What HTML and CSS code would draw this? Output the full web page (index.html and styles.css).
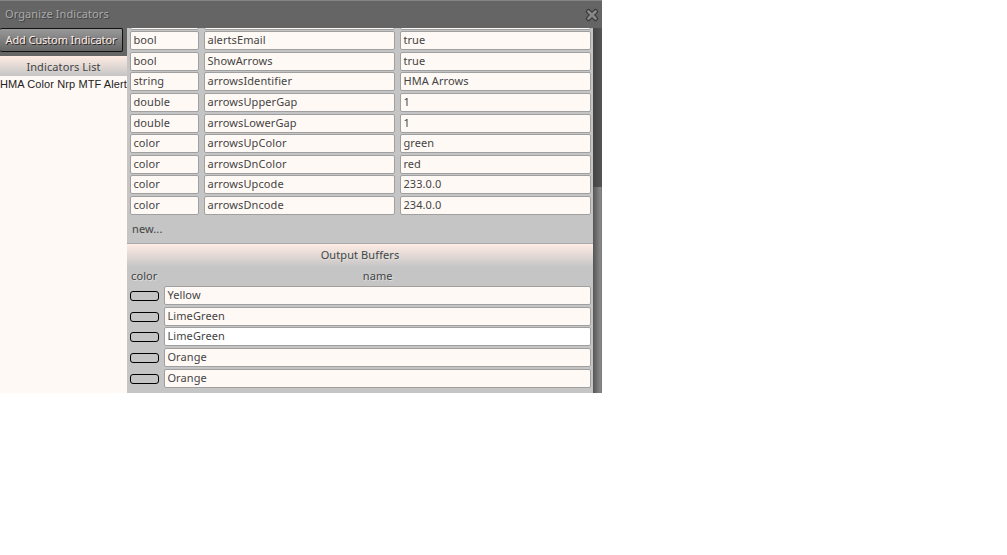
FILE: index.html
```
<!DOCTYPE html>
<html>
<head>
    <meta charset="UTF-8">
    <title>Organize Indicators</title>
    <link rel="stylesheet" href="styles.css">
</head>
<body>

<div class="dialog">
    <div class="titlebar">
        <span class="title">Organize Indicators</span>
        <svg class="close" width="14" height="14" viewBox="0 0 14 14">
            <path class="close-edge" d="M3.5 3.5L10.5 10.5M10.5 3.5L3.5 10.5"/>
            <path class="close-face" d="M3.5 3.5L10.5 10.5M10.5 3.5L3.5 10.5"/>
        </svg>
    </div>

    <div class="content">
        <div class="sidebar">
            <div class="toolbar"><button class="add">Add Custom Indicator</button></div>
            <div class="list-title">Indicators List</div>
            <div class="list-item">HMA Color Nrp MTF Alert</div>
        </div>

        <div class="main">
            <div class="params">
                <div class="param cut"><div class="field"></div><div class="field"></div><div class="field"></div></div>
                <div class="param"><div class="field">bool</div><div class="field">alertsEmail</div><div class="field">true</div></div>
                <div class="param"><div class="field">bool</div><div class="field">ShowArrows</div><div class="field">true</div></div>
                <div class="param"><div class="field">string</div><div class="field">arrowsIdentifier</div><div class="field">HMA Arrows</div></div>
                <div class="param"><div class="field">double</div><div class="field">arrowsUpperGap</div><div class="field">1</div></div>
                <div class="param"><div class="field">double</div><div class="field">arrowsLowerGap</div><div class="field">1</div></div>
                <div class="param"><div class="field">color</div><div class="field">arrowsUpColor</div><div class="field">green</div></div>
                <div class="param"><div class="field">color</div><div class="field">arrowsDnColor</div><div class="field">red</div></div>
                <div class="param"><div class="field">color</div><div class="field">arrowsUpcode</div><div class="field">233.0.0</div></div>
                <div class="param"><div class="field">color</div><div class="field">arrowsDncode</div><div class="field">234.0.0</div></div>
            </div>
            <div class="new">new...</div>

            <div class="section-title">Output Buffers</div>
            <div class="buffer-head"><span>color</span><span class="name">name</span></div>
            <div class="buffers">
                <div class="buffer"><div class="swatch"></div><div class="field">Yellow</div></div>
                <div class="buffer"><div class="swatch"></div><div class="field">LimeGreen</div></div>
                <div class="buffer"><div class="swatch"></div><div class="field active">LimeGreen</div></div>
                <div class="buffer"><div class="swatch"></div><div class="field">Orange</div></div>
                <div class="buffer"><div class="swatch"></div><div class="field">Orange</div></div>
            </div>
        </div>

        <div class="scrollbar"><div class="thumb"></div></div>
    </div>
</div>

</body>
</html>
```

FILE: styles.css
```
* {
    box-sizing: border-box;
    padding: 0; margin: 0;
}
body {
    background: #fff;
    color: #444;
    font-family: "Noto Sans", "Open Sans", sans-serif;
    font-size: 11px;
    letter-spacing: 0.1px;
}
.dialog {
    width: 602px;
    height: 393px;
    overflow: hidden;
}
.titlebar {
    display: flex;
    justify-content: space-between;
    height: 28px;
    padding: 0 3px 0 5px;
    border-top: 1px solid #858585;
    background: #656565;
}
.title {
    line-height: 26px;
    color: #aaa;
    text-shadow: 1px 1px 0 #444;
}
.close {
    margin-top: 7px;
    fill: none;
    stroke-linecap: round;
}
.close-edge {
    stroke: #383838;
    stroke-width: 5;
}
.close-face {
    stroke: #888;
    stroke-width: 2.8;
}
.content {
    display: flex;
    height: 365px;
}

/* left column */
.sidebar {
    width: 127px;
    overflow: hidden;
    background: #fff9f5;
}
.toolbar {
    height: 28px;
    background: #656565;
}
.add {
    display: block;
    width: 123px;
    height: 24px;
    border: 1px solid #111;
    border-left: 0;
    border-radius: 2px;
    background: linear-gradient(#999, #666);
    color: #ffece4;
    font: inherit;
    letter-spacing: -0.1px;
    line-height: 22px;
    white-space: nowrap;
    text-shadow: 1px 1px 0 #222;
}
.list-title {
    height: 20px;
    line-height: 22px;
    text-align: center;
    background: linear-gradient(#ffece4, #c5c5c5);
}
.list-item {
    font-family: "Liberation Sans", Arial, sans-serif;
    line-height: 16px;
    color: #222;
    white-space: nowrap;
}

/* right column */
.main {
    width: 466px;
    overflow: hidden;
    background: #c5c5c5;
}
.params {
    height: 187px;
    padding: 0 2px 0 3px;
    overflow: hidden;
}
.param {
    display: grid;
    grid-template-columns: 69px 191px 191px;
    column-gap: 5px;
    margin-bottom: 1.6px;
}
.cut {
    margin-top: -17.4px;
}
.field {
    height: 19px;
    padding-left: 2.4px;
    border: 1px solid #a0a0a0;
    border-radius: 2px;
    background: #fff9f5;
    line-height: 16px;
}
.active {
    background: #fff;
}
.new {
    height: 28px;
    padding-left: 5px;
    line-height: 28px;
}
.section-title {
    height: 24px;
    border-top: 1px solid #aaa;
    line-height: 22px;
    text-align: center;
    background: linear-gradient(#ffece4, #c5c5c5);
    text-shadow: 1px 1px 0 #ddd;
}
.buffer-head {
    display: flex;
    height: 19.2px;
    padding: 0 2px 0 4px;
    line-height: 18px;
    text-shadow: 1px 1px 0 #ddd;
}
.name {
    flex: 1;
    padding-left: 7px;
    text-align: center;
}
.buffers {
    padding: 0 2px 0 3px;
}
.buffer {
    display: flex;
    align-items: center;
    gap: 5px;
    margin-bottom: 1.6px;
}
.buffer .field {
    flex: 1;
}
.swatch {
    width: 29px;
    height: 10px;
    margin-top: 1px;
    border: 1px solid #000;
    border-radius: 3px;
}

.scrollbar {
    width: 9px;
    background: linear-gradient(90deg, #444, #555);
}
.thumb {
    height: 206px;
    margin-top: 159px;
    background: linear-gradient(90deg, #555, #888 80%, #777);
}
```
